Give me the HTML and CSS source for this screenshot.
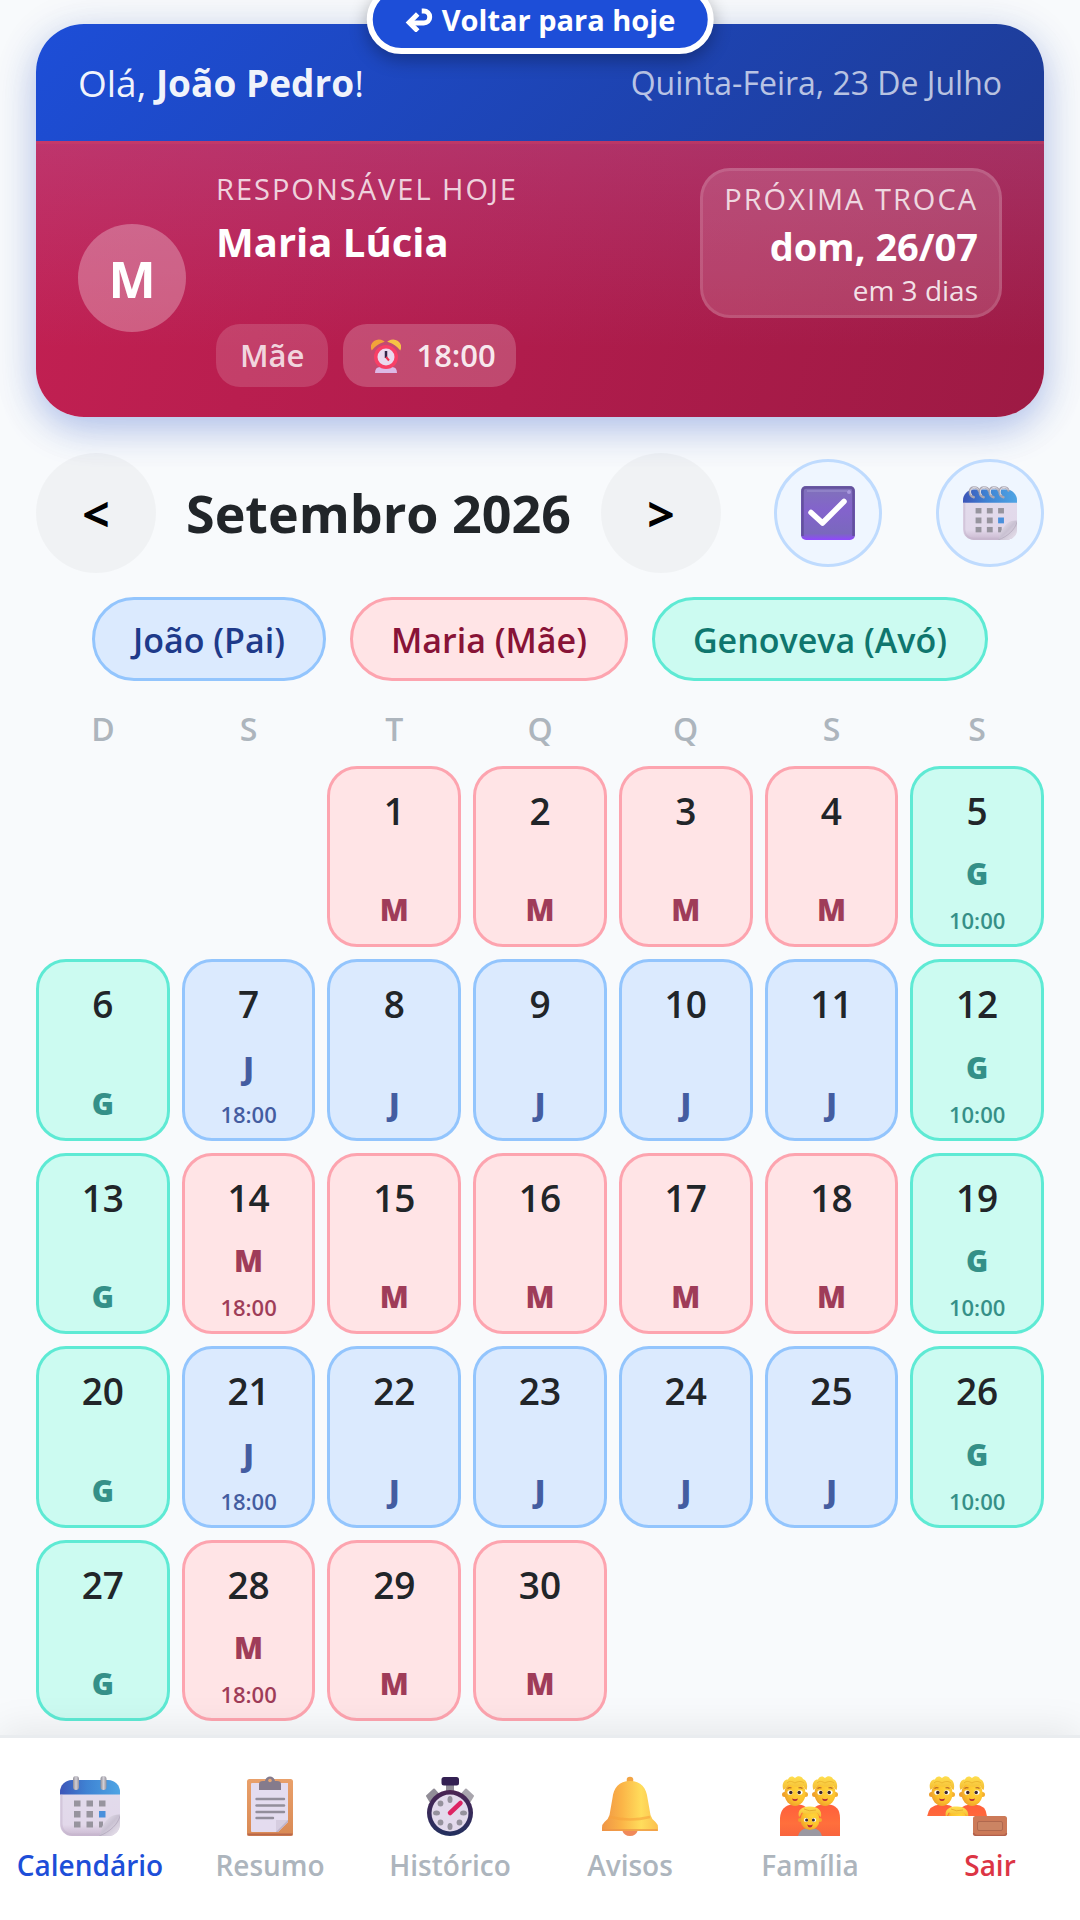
FILE: index.html
```html
<!DOCTYPE html>
<html lang="pt-BR">
<head>
    <meta charset="UTF-8">
    <meta name="viewport" content="width=device-width, initial-scale=1.0">
    <title>Calendário</title>
    <link rel="stylesheet" href="styles.css">
</head>
<body>
    <!-- Shared icons -->
    <svg class="sprite" width="0" height="0" aria-hidden="true">
        <defs>
            <linearGradient id="blueTop" x1="0" x2="1"><stop offset="0" stop-color="#3c55b8"/><stop offset="0.45" stop-color="#3f83d3"/><stop offset="1" stop-color="#4fa5e4"/></linearGradient>
            <linearGradient id="paper" x1="0" y1="0" x2="0" y2="1"><stop offset="0" stop-color="#e2dcec"/><stop offset="0.8" stop-color="#e2d8ea"/><stop offset="1" stop-color="#c9b7cf"/></linearGradient>
            <linearGradient id="fold" x1="0" y1="0" x2="1" y2="1"><stop offset="0" stop-color="#f3eff7"/><stop offset="0.5" stop-color="#c9c1d2"/><stop offset="1" stop-color="#eee8f2"/></linearGradient>
            <linearGradient id="ring" x1="0" x2="1"><stop offset="0" stop-color="#8f8d96"/><stop offset="0.5" stop-color="#d2cfd6"/><stop offset="1" stop-color="#96939d"/></linearGradient>
            <linearGradient id="shirt" x1="0" y1="0" x2="0" y2="1"><stop offset="0" stop-color="#ff5f3b"/><stop offset="0.6" stop-color="#ff6f3c"/><stop offset="1" stop-color="#f9643e"/></linearGradient>
            <radialGradient id="skin" cx="0.65" cy="0.35" r="0.75"><stop offset="0" stop-color="#ffd43a"/><stop offset="0.6" stop-color="#fdc22c"/><stop offset="1" stop-color="#ec9a2c"/></radialGradient>
            <linearGradient id="hair" x1="0" y1="0" x2="0" y2="1"><stop offset="0" stop-color="#ffdf4f"/><stop offset="1" stop-color="#f3bb34"/></linearGradient>
            <linearGradient id="purple" x1="0" y1="0" x2="0" y2="1"><stop offset="0" stop-color="#8073b8"/><stop offset="0.45" stop-color="#8363cc"/><stop offset="0.88" stop-color="#7a68bd"/><stop offset="1" stop-color="#9147ff"/></linearGradient>
            <linearGradient id="bellBody" x1="0" x2="1"><stop offset="0" stop-color="#ef9546"/><stop offset="0.35" stop-color="#fbb447"/><stop offset="0.7" stop-color="#ffdd5c"/><stop offset="1" stop-color="#fbc04f"/></linearGradient>
            <linearGradient id="watchRim" x1="0" y1="0" x2="0" y2="1"><stop offset="0" stop-color="#4b2453"/><stop offset="1" stop-color="#23305f"/></linearGradient>
            <linearGradient id="wood" x1="0" y1="0" x2="0" y2="1"><stop offset="0" stop-color="#e9a06a"/><stop offset="1" stop-color="#d98a55"/></linearGradient>
            <clipPath id="topOnly"><rect x="0" y="0" width="60" height="40"/></clipPath>
        </defs>

        <symbol id="calBody" viewBox="0 0 60 60">
            <rect x="0" y="4" width="60" height="56" rx="12" fill="url(#paper)"/>
            <path d="M0 18.500V16A12 12 0 0 1 12 4H48A12 12 0 0 1 60 16V18.500Z" fill="url(#blueTop)"/>
            <path d="M1.500 18.500V48A10.500 10.500 0 0 0 12 58.500H40" fill="none" stroke="#c4b3cb" stroke-width="2" opacity="0.5"/>
            <g fill="#97949e">
                <rect x="14" y="24.500" width="6.500" height="6"/><rect x="26.500" y="24.500" width="6.500" height="6"/><rect x="39" y="24.500" width="6.500" height="6"/>
                <rect x="14" y="35" width="6.500" height="6.500"/><rect x="26.500" y="35" width="6.500" height="6.500"/>
                <rect x="14" y="45.500" width="6.500" height="6"/><rect x="26.500" y="45.500" width="6.500" height="6"/><rect x="39" y="45.500" width="4" height="6"/>
            </g>
            <rect x="39" y="35" width="6.500" height="6.500" fill="#4a90dc"/>
            <path d="M60 38.500V48A12 12 0 0 1 48 60H39C42 56 40.500 52 44 47.500C48 42 52 38 60 38.500Z" fill="url(#fold)"/>
            <path d="M60 40C58 48 50 56 39 60" fill="none" stroke="#b9afc2" stroke-width="1"/>
        </symbol>
        <symbol id="people" viewBox="0 0 60 60">
            <g id="adult">
                <path d="M0 60V42Q1 29 13 28.500H18Q30 29 30 42V60Z" fill="url(#shirt)"/>
                <circle cx="4.500" cy="18.500" r="2.500" fill="#ef9f2c"/><circle cx="25.500" cy="18.500" r="2.500" fill="#f4ad2e"/>
                <ellipse cx="15" cy="17.500" rx="10.500" ry="12.500" fill="url(#skin)"/>
                <path d="M3.500 14C1 8 4.500 3 8 3.500C9 0 13 -0.500 15 2C18-1 22 0.500 23 3C27 4 28 10 26.500 14C24 12.500 24 9.500 22 9.500C18 12 12 10 9 8.500C6.500 9.500 6.500 12 3.500 14Z" fill="url(#hair)"/>
                <path d="M7 7C10 4 13 6 15 7C18 5 22 5 24 7" fill="none" stroke="#e9b02b" stroke-width="0.800"/>
                <path d="M7.500 12.500Q9.500 11 11.500 12M18.500 12Q20.500 11 22.500 12.500" fill="none" stroke="#b8682a" stroke-width="1.300"/>
                <ellipse cx="10" cy="16.500" rx="2.600" ry="2.300" fill="#fff"/><ellipse cx="20" cy="16.500" rx="2.600" ry="2.300" fill="#fff"/>
                <circle cx="10.800" cy="16.500" r="1.700" fill="#3b2430"/><circle cx="19.200" cy="16.500" r="1.700" fill="#3b2430"/>
                <path d="M12 22.500Q15 24 18 22.500Q17.500 25 15 25Q12.500 25 12 22.500Z" fill="#b3253a"/>
            </g>
            <use href="#adult" x="30"/>
            <path d="M18 60Q20 53 27 52H33Q40 53 42 60Z" fill="#9b98a1"/>
            <circle cx="20" cy="44" r="2" fill="#ef9f2c"/><circle cx="40" cy="44" r="2" fill="#f4ad2e"/>
            <ellipse cx="30" cy="43.500" rx="9.500" ry="10.500" fill="url(#skin)"/>
            <path d="M19 41C17 34 22 30.500 29 30.500C37 30 42.500 34 41 41C38.500 40 38.500 37 36 36.500C31 38.500 24 38 22 36.500C20.500 38 21 39.500 19 41Z" fill="url(#hair)"/>
            <path d="M24 33Q29 36 36 34" fill="none" stroke="#e0a328" stroke-width="0.800"/>
            <ellipse cx="26" cy="44" rx="2.200" ry="2" fill="#fff"/><ellipse cx="34" cy="44" rx="2.200" ry="2" fill="#fff"/>
            <circle cx="26.600" cy="44" r="1.500" fill="#3b2430"/><circle cx="33.400" cy="44" r="1.500" fill="#3b2430"/>
            <path d="M27 48.500Q30 50 33 48.500Q32 51.500 30 51.500Q28 51.500 27 48.500Z" fill="#c02738"/>
        </symbol>
    </svg>

    <main class="page">
        <a class="back-today" href="#hoje">
            <svg width="28" height="24" viewBox="0 0 28 24" aria-hidden="true">
                <path d="M17 3H19A6 6 0 0 1 19 15H5" fill="none" stroke="#fff" stroke-width="5"/>
                <path d="M13 6L4.500 14.500L13 23" fill="none" stroke="#fff" stroke-width="5"/>
            </svg>
            Voltar para hoje
        </a>

        <section class="hero">
            <header class="hero-top">
                <p class="hello">Olá, <strong>João Pedro</strong>!</p>
                <p class="today">Quinta-Feira, 23 De Julho</p>
            </header>
            <div class="hero-body">
                <div class="avatar">M</div>
                <div class="info">
                    <p class="label">RESPONSÁVEL HOJE</p>
                    <p class="name">Maria Lúcia</p>
                    <div class="tags">
                        <span class="tag">Mãe</span>
                        <span class="tag tag-time">
                            <svg width="30" height="34" viewBox="0 0 30 34" aria-hidden="true">
                                <path d="M1 10C-1 4 6-1 12 2.500Q5 5 1 10Z" fill="#f2a33a" stroke="#f2a33a" stroke-width="1.500"/>
                                <path d="M29 10C31 4 24-1 18 2.500Q25 5 29 10Z" fill="#f6c445" stroke="#f6c445" stroke-width="1.500"/>
                                <path d="M4 34Q4 28 9 28H21Q26 28 26 34Z" fill="#dcb9e6"/>
                                <circle cx="15" cy="18" r="12" fill="#f83f66"/>
                                <circle cx="15" cy="18" r="8.500" fill="#ead9ee"/>
                                <path d="M15 12V19" stroke="#33264a" stroke-width="2.500"/>
                                <path d="M15 18L18 21.500" stroke="#f2324f" stroke-width="2"/>
                            </svg>
                            18:00
                        </span>
                    </div>
                </div>
                <div class="next">
                    <p class="label">PRÓXIMA TROCA</p>
                    <p class="next-date">dom, 26/07</p>
                    <p class="next-in">em 3 dias</p>
                </div>
            </div>
        </section>

        <div class="month">
            <button class="arrow" type="button" aria-label="Mês anterior">&lt;</button>
            <h1>Setembro 2026</h1>
            <button class="arrow" type="button" aria-label="Próximo mês">&gt;</button>
            <div class="actions">
                <button class="round" type="button" aria-label="Selecionar dias">
                    <svg width="54" height="54" viewBox="0 0 54 54" aria-hidden="true">
                        <rect width="54" height="54" rx="5" fill="url(#purple)"/>
                        <path d="M1.500 50V5Q1.500 1.500 5 1.500H49Q52.500 1.500 52.500 5V50" fill="none" stroke="#5d4a96" stroke-width="2.500" opacity="0.8"/>
                        <path d="M6 5H46" stroke="#9689cc" stroke-width="2" opacity="0.7"/>
                        <circle cx="48" cy="6" r="2" fill="#a99ade"/>
                        <path d="M10 26.500L21.500 37L43 15.500" fill="none" stroke="#fff" stroke-width="5.500" stroke-linecap="round" stroke-linejoin="round"/>
                    </svg>
                </button>
                <button class="round" type="button" aria-label="Abrir calendário">
                    <svg width="54" height="54" viewBox="0 0 60 60" aria-hidden="true">
                        <use href="#calBody" width="60" height="60"/>
                        <g fill="none" stroke="#aaa6b2" stroke-width="2.600" stroke-linecap="round">
                            <path id="coil" d="M12 12.500C6 11 6 1.500 12.500 1.500C15 1.500 17 3 17.500 5"/>
                            <use href="#coil" x="11"/><use href="#coil" x="22"/><use href="#coil" x="33"/>
                        </g>
                        <g stroke="#e9e6ee" stroke-width="1" fill="none">
                            <path id="shine" d="M9.500 10C7 6 9 2 12.500 1.500C14.500 1.500 16 2.500 17 4"/>
                            <use href="#shine" x="11"/><use href="#shine" x="22"/><use href="#shine" x="33"/>
                        </g>
                    </svg>
                </button>
            </div>
        </div>

        <div class="legend">
            <span class="person blue">João (Pai)</span>
            <span class="person red">Maria (Mãe)</span>
            <span class="person green">Genoveva (Avó)</span>
        </div>

        <div class="weekdays">
            <span>D</span><span>S</span><span>T</span><span>Q</span><span>Q</span><span>S</span><span>S</span>
        </div>

        <div class="days">
            <button class="day first red" type="button">1<b>M</b></button>
            <button class="day red" type="button">2<b>M</b></button>
            <button class="day red" type="button">3<b>M</b></button>
            <button class="day red" type="button">4<b>M</b></button>
            <button class="day swap green" type="button">5<b>G</b><time>10:00</time></button>

            <button class="day green" type="button">6<b>G</b></button>
            <button class="day swap blue" type="button">7<b>J</b><time>18:00</time></button>
            <button class="day blue" type="button">8<b>J</b></button>
            <button class="day blue" type="button">9<b>J</b></button>
            <button class="day blue" type="button">10<b>J</b></button>
            <button class="day blue" type="button">11<b>J</b></button>
            <button class="day swap green" type="button">12<b>G</b><time>10:00</time></button>

            <button class="day green" type="button">13<b>G</b></button>
            <button class="day swap red" type="button">14<b>M</b><time>18:00</time></button>
            <button class="day red" type="button">15<b>M</b></button>
            <button class="day red" type="button">16<b>M</b></button>
            <button class="day red" type="button">17<b>M</b></button>
            <button class="day red" type="button">18<b>M</b></button>
            <button class="day swap green" type="button">19<b>G</b><time>10:00</time></button>

            <button class="day green" type="button">20<b>G</b></button>
            <button class="day swap blue" type="button">21<b>J</b><time>18:00</time></button>
            <button class="day blue" type="button">22<b>J</b></button>
            <button class="day blue" type="button">23<b>J</b></button>
            <button class="day blue" type="button">24<b>J</b></button>
            <button class="day blue" type="button">25<b>J</b></button>
            <button class="day swap green" type="button">26<b>G</b><time>10:00</time></button>

            <button class="day green" type="button">27<b>G</b></button>
            <button class="day swap red" type="button">28<b>M</b><time>18:00</time></button>
            <button class="day red" type="button">29<b>M</b></button>
            <button class="day red" type="button">30<b>M</b></button>
        </div>
    </main>

    <nav class="tabs">
        <a class="tab active" href="#calendario">
            <svg width="60" height="60" viewBox="0 0 60 60" aria-hidden="true">
                <use href="#calBody" width="60" height="60"/>
                <rect x="13" y="0" width="6" height="14" rx="3" fill="url(#ring)"/>
                <rect x="40.500" y="0" width="6" height="14" rx="3" fill="url(#ring)"/>
            </svg>
            Calendário
        </a>
        <a class="tab" href="#resumo">
            <svg width="60" height="60" viewBox="0 0 60 60" aria-hidden="true">
                <rect x="7" y="3" width="46" height="57" rx="2.500" fill="url(#wood)"/>
                <path d="M7.500 58.500H52.500" stroke="#b9674a" stroke-width="2"/>
                <path d="M12 7H48V46L38 56H12Q11 56 11 55V8Q11 7 12 7Z" fill="#e4dcef"/>
                <path d="M48 44V46L38 56H36V44Z" fill="#bdb3ca"/>
                <path d="M36 44H48L36 56Z" fill="#d6cde0"/>
                <path d="M19 14V8Q19 5 23 5H25Q26 0.500 30 0.500T35 5H37Q41 5 41 8V14Z" fill="#857b8c"/>
                <circle cx="30" cy="4.500" r="1.800" fill="#e7a877"/>
                <g stroke="#938e9b" stroke-width="2.400" stroke-linecap="round"><path d="M16.500 23H44"/><path d="M16.500 29.500H44"/><path d="M16.500 36H44"/><path d="M16.500 42H33"/></g>
            </svg>
            Resumo
        </a>
        <a class="tab" href="#historico">
            <svg width="60" height="60" viewBox="0 0 60 60" aria-hidden="true">
                <rect x="26" y="7" width="8" height="8" fill="#918d97"/>
                <rect x="21.500" y="1" width="17.500" height="8.500" rx="2.500" fill="#332052"/>
                <path d="M7 20L14 13.500L18 18L10 25Z" fill="#918d97" stroke="#918d97" stroke-width="2" stroke-linejoin="round"/>
                <path d="M53 20L46 13.500L42 18L50 25Z" fill="#a8a5ad" stroke="#a8a5ad" stroke-width="2" stroke-linejoin="round"/>
                <circle cx="30" cy="37" r="23" fill="url(#watchRim)"/>
                <circle cx="30" cy="37" r="18.500" fill="#e3daec"/>
                <g fill="#96929d">
                    <ellipse cx="30" cy="23.500" rx="2.500" ry="3.500"/><ellipse cx="30" cy="50.500" rx="2.500" ry="3.500"/>
                    <ellipse cx="16.500" cy="37" rx="3.500" ry="2.500"/><ellipse cx="43.500" cy="37" rx="3.500" ry="2.500"/>
                    <circle cx="20.500" cy="27.500" r="2.900"/><circle cx="20.500" cy="46.500" r="2.900"/><circle cx="39.500" cy="46.500" r="2.900"/>
                </g>
                <path d="M30 37L40.500 27" stroke="#dd2463" stroke-width="4.500" stroke-linecap="round"/>
            </svg>
            Histórico
        </a>
        <a class="tab" href="#avisos">
            <svg width="60" height="60" viewBox="0 0 60 60" aria-hidden="true">
                <circle cx="30" cy="4" r="3.300" fill="#f3a544"/>
                <path d="M22 54Q24 60 30 60T38 54Z" fill="#f08a5a"/>
                <path d="M30 5C41 5 46.500 12 47.500 22L50.500 39Q51.500 43 55.500 46Q58 48 58 52V55H2V52Q2 48 4.500 46Q8.500 43 9.500 39L12.500 22C13.500 12 19 5 30 5Z" fill="url(#bellBody)"/>
                <path d="M10 41Q30 46 50 41" fill="none" stroke="#f7a13c" stroke-width="2.500" opacity="0.6"/>
                <path d="M2.500 54H57.500" stroke="#ee9347" stroke-width="2" opacity="0.7"/>
            </svg>
            Avisos
        </a>
        <a class="tab" href="#familia">
            <svg width="60" height="60" viewBox="0 0 60 60" aria-hidden="true"><use href="#people" width="60" height="60"/></svg>
            Família
        </a>
        <a class="tab leave" href="#sair">
            <svg width="126" height="60" viewBox="0 0 126 60" aria-hidden="true">
                <g clip-path="url(#topOnly)"><use href="#people" width="60" height="60"/></g>
                <rect x="46" y="40" width="34" height="20" rx="2.500" fill="#cc7a58"/>
                <path d="M46.500 57Q47 59.500 50 59.500H77Q79.500 59 79.500 57" fill="none" stroke="#b2604c" stroke-width="1.500"/>
                <rect x="50.500" y="45.500" width="25" height="9" rx="1.500" fill="#cb8463" stroke="#b0684e" stroke-width="1"/>
            </svg>
            Sair
        </a>
    </nav>
</body>
</html>
```
FILE: styles.css
```css
* {
    box-sizing: border-box;
}

body {
    margin: 0;
    min-height: 100vh;
    display: flex;
    flex-direction: column;
    background-color: #f8fafc;
    color: #212529;
    font-family: "Segoe UI", "Open Sans", "Noto Sans", sans-serif;
}

p, h1 {
    margin: 0;
}

button {
    font-family: inherit;
    cursor: pointer;
}

a {
    text-decoration: none;
}

svg {
    display: block;
    flex-shrink: 0;
}

.sprite {
    position: absolute;
}

.page {
    flex: 1;
    padding: 24px 36px 12px;
}

/* Floating button */
.back-today {
    position: absolute;
    top: -15px;
    left: 50%;
    transform: translateX(-50%);
    z-index: 5;
    display: flex;
    align-items: center;
    gap: 9px;
    padding: 9px 32px;
    border: 6px solid #fff;
    border-radius: 36px;
    background-color: #1d4ed8;
    box-shadow: 0 6px 18px rgba(0, 0, 0, 0.3);
    color: #fff;
    font-size: 29px;
    font-weight: 700;
    line-height: 39px;
    white-space: nowrap;
}

/* Hero card */
.hero {
    border-radius: 48px;
    overflow: hidden;
    box-shadow: 0 12px 36px rgba(29, 78, 216, 0.3), 0 6px 60px rgba(0, 0, 0, 0.06);
    color: #fff;
}

.hero-top {
    display: flex;
    align-items: center;
    justify-content: space-between;
    padding: 35px 42px 34px;
    background: linear-gradient(135deg, #1d4ed8, #1e3c96);
    line-height: 48px;
}

.hello {
    font-size: 37px;
    color: rgba(255, 255, 255, 0.95);
}

.today {
    font-size: 32px;
    color: rgba(255, 255, 255, 0.7);
}

.hero-body {
    display: flex;
    align-items: center;
    padding: 24px 42px 30px;
    border-top: 3px solid rgba(220, 70, 100, 0.25);
    background: linear-gradient(180deg, rgba(180, 110, 180, 0.27), rgba(180, 100, 170, 0) 75%), linear-gradient(105deg, #c22052, #b01c4c 50%, #9d1a44);
    background-origin: border-box;
}

.avatar {
    width: 108px;
    height: 108px;
    margin-right: 30px;
    border-radius: 50%;
    background-color: rgba(255, 255, 255, 0.28);
    font-size: 50px;
    font-weight: 700;
    line-height: 111px;
    text-align: center;
}

.info {
    flex: 1;
}

.label {
    font-size: 29px;
    line-height: 42px;
    letter-spacing: 2px;
    color: rgba(255, 255, 255, 0.8);
}

.name {
    margin-bottom: 51px;
    font-size: 40px;
    font-weight: 700;
    line-height: 63px;
}

.tags {
    display: flex;
    gap: 15px;
}

.tag {
    display: flex;
    align-items: center;
    gap: 15px;
    padding: 0 24px;
    border-radius: 24px;
    background-color: rgba(255, 255, 255, 0.15);
    color: rgba(255, 255, 255, 0.8);
    font-size: 31px;
    font-weight: 600;
    line-height: 63px;
}

.tag-time {
    padding: 0 20px 0 28px;
    background-color: rgba(255, 255, 255, 0.2);
    color: rgba(255, 255, 255, 0.9);
}

.next {
    align-self: flex-start;
    padding: 7px 21px;
    border: 3px solid rgba(255, 255, 255, 0.12);
    border-radius: 30px;
    background-color: rgba(255, 255, 255, 0.14);
    text-align: right;
}

.next-date {
    font-size: 38px;
    font-weight: 700;
    line-height: 52px;
}

.next-in {
    font-size: 28px;
    line-height: 36px;
    color: rgba(255, 255, 255, 0.85);
}

/* Month bar */
.month {
    display: flex;
    align-items: center;
    gap: 30px;
    margin-top: 36px;
}

.month h1 {
    font-size: 52px;
    font-weight: 700;
    line-height: 66px;
    white-space: nowrap;
}

.arrow {
    width: 120px;
    height: 120px;
    padding: 0;
    border: none;
    border-radius: 50%;
    background-color: rgba(0, 0, 0, 0.03);
    color: #000;
    font-size: 48px;
    font-weight: 700;
}

.actions {
    display: flex;
    gap: 54px;
    margin-left: auto;
}

.round {
    display: flex;
    align-items: center;
    justify-content: center;
    width: 108px;
    height: 108px;
    padding: 0;
    border: 3px solid #bfdbfe;
    border-radius: 50%;
    background-color: #eff6ff;
}

/* Colours per person */
.blue {
    background-color: #dbeafe;
    border-color: #93c5fd;
    color: #1e3a8a;
}

.red {
    background-color: #ffe4e6;
    border-color: #fda4af;
    color: #881337;
}

.green {
    background-color: #ccfbf1;
    border-color: #5eead4;
    color: #0f766e;
}

.legend {
    display: flex;
    justify-content: center;
    gap: 24px;
    margin-top: 24px;
}

.person {
    padding: 3px 38px 0;
    border-width: 3px;
    border-style: solid;
    border-radius: 42px;
    font-size: 34px;
    font-weight: 600;
    line-height: 75px;
}

/* Calendar */
.weekdays, .days {
    display: grid;
    grid-template-columns: repeat(7, 1fr);
    column-gap: 12px;
}

.weekdays {
    margin: 30px 0 19px;
    color: #adb5bd;
    font-size: 32px;
    font-weight: 600;
    line-height: 36px;
    text-align: center;
}

.days {
    row-gap: 12px;
}

.day {
    display: flex;
    flex-direction: column;
    align-items: center;
    aspect-ratio: 14 / 19;
    padding: 18px 0 16px;
    border-width: 3px;
    border-style: solid;
    border-radius: 30px;
    color: #212529;
    font-size: 37px;
    font-weight: 600;
    line-height: 48px;
}

.first {
    grid-column-start: 3;
}

.day b {
    margin-top: auto;
    font-size: 30px;
    font-weight: 800;
    line-height: 36px;
    opacity: 0.8;
}

.day time {
    margin-top: 16px;
    font-size: 22px;
    line-height: 24px;
    opacity: 0.8;
}

.day.swap {
    padding-bottom: 12px;
}

.day.blue b, .day.blue time {
    color: #1e3a8a;
}

.day.red b, .day.red time {
    color: #881337;
}

.day.green b, .day.green time {
    color: #0f766e;
}

/* Bottom navigation */
.tabs {
    position: sticky;
    bottom: 0;
    z-index: 4;
    display: grid;
    grid-template-columns: repeat(6, 1fr);
    border-top: 3px solid #e9ecef;
    background-color: #fff;
    box-shadow: 0 -6px 36px rgba(0, 0, 0, 0.08);
}

.tab {
    display: flex;
    flex-direction: column;
    align-items: center;
    gap: 8px;
    padding: 38px 0 34px;
    color: #adb5bd;
    font-size: 28px;
    font-weight: 600;
    line-height: 42px;
}

.tab.active {
    color: #1d4ed8;
}

.tab.leave {
    color: #dc3545;
}
```
